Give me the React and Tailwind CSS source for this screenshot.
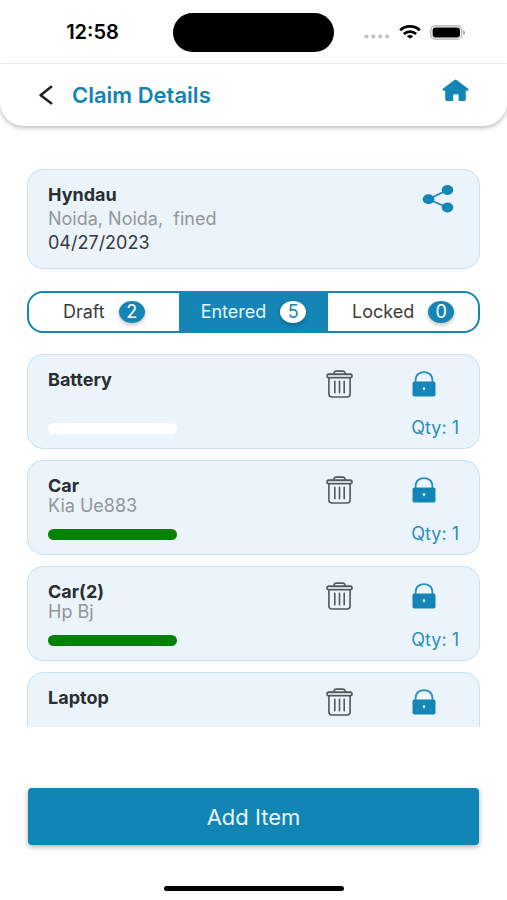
import { useState } from "react";

const items = [
  { id: 1, name: "Battery", detail: "", qty: 1, bar: "bg-white" },
  { id: 2, name: "Car", detail: "Kia Ue883", qty: 1, bar: "bg-[#058205]" },
  { id: 3, name: "Car(2)", detail: "Hp Bj", qty: 1, bar: "bg-[#058205]" },
  { id: 4, name: "Laptop", detail: "", bar: "bg-white" },
];

const tabs = [
  { name: "Draft", count: 2 },
  { name: "Entered", count: 5 },
  { name: "Locked", count: 0 },
];

function StatusBar() {
  return (
    <div className="grid h-16 shrink-0 grid-cols-[1fr_auto_1fr] items-center">
      <span className="pl-3 text-center text-xl leading-6 font-semibold text-black">12:58</span>
      <div className="h-[39px] w-[161px] rounded-full bg-black" />
      <div className="flex items-center pl-[30px]">
        <svg className="mt-2 h-[5px] w-[26px]" viewBox="0 0 26 5" fill="#c4c4c4">
          <ellipse cx="2.5" cy="2.5" rx="2.1" ry="1.9" />
          <ellipse cx="9.3" cy="2.5" rx="2.1" ry="1.9" />
          <ellipse cx="16.2" cy="2.5" rx="2.1" ry="1.9" />
          <ellipse cx="23.2" cy="2.5" rx="2.1" ry="1.9" />
        </svg>
        <svg className="ml-[9px] h-[14px] w-[22px]" viewBox="0 0 22 14" fill="none" stroke="#000" strokeWidth="2.8">
          <path d="M1.2 5.2C6.6 .2 15.4 .2 20.8 5.2" />
          <path d="M4.9 9C8.4 5.9 13.6 5.9 17.1 9" />
          <path d="M11 13.8L7.8 11.2C9.6 9.7 12.4 9.7 14.2 11.2Z" fill="#000" stroke="none" />
        </svg>
        <svg className="ml-[9px] h-[15px] w-[36px]" viewBox="0 0 36 15">
          <rect x=".8" y=".8" width="31" height="13.4" rx="4.5" fill="#fff" stroke="#b0b0b0" strokeWidth="1.2" />
          <rect x="2.6" y="2.5" width="27.4" height="10" rx="3" fill="#000" />
          <path d="M33.4 5.2C35.4 6 35.4 9 33.4 9.8Z" fill="#8a8a8a" />
        </svg>
      </div>
    </div>
  );
}

function Header() {
  return (
    <header className="flex h-[62px] shrink-0 items-center rounded-b-3xl bg-white px-[38px] shadow-[0_2px_4px_rgba(0,0,0,0.25)]">
      <button aria-label="Back">
        <svg className="h-5 w-4" viewBox="0 0 16 20" fill="none" stroke="#222" strokeWidth="2.6" strokeLinecap="round" strokeLinejoin="round">
          <path d="M13.2 1.8L2.6 10.2L13.2 18.2" />
        </svg>
      </button>
      <h1 className="ml-[18px] flex-1 text-[22px] leading-6 font-semibold text-[#1583b1]">Claim Details</h1>
      <a href="#home" aria-label="Home" className="mb-[10px]">
        <svg className="h-[23px] w-[27px]" viewBox="0 0 27 23" fill="#1486b5">
          <path d="M12.4 1Q13.5 .2 14.6 1L26.2 9.8Q26.9 10.5 26.3 11.3Q25.9 11.8 25 11.8H23.8V20.4Q23.8 22 22 22H16.6V16.4Q16.6 15.2 15.4 15.2H12.4Q11.2 15.2 11.2 16.4V22H5Q3.2 22 3.2 20.4V11.8H2Q1.1 11.8 .7 11.3Q.1 10.5 .8 9.8Z" />
        </svg>
      </a>
    </header>
  );
}

function ShareIcon() {
  return (
    <svg className="h-7 w-8" viewBox="0 0 32 28" fill="#1486b5">
      <path d="M25.5 5L6.5 14.2L25.5 22.5" fill="none" stroke="#1486b5" strokeWidth="1.7" />
      <ellipse cx="25.5" cy="5" rx="5.8" ry="4.9" />
      <ellipse cx="6.5" cy="14.2" rx="5.8" ry="4.9" />
      <ellipse cx="25.5" cy="22.5" rx="5.8" ry="4.9" />
    </svg>
  );
}

function TrashIcon() {
  return (
    <svg className="h-7 w-[27px]" viewBox="0 0 27 28" fill="none" stroke="#53585c" strokeWidth="1.6" strokeLinecap="round" strokeLinejoin="round">
      <path d="M7.6 4L8.2 2.3Q8.6 1.1 10 1.1H17Q18.4 1.1 18.8 2.3L19.4 4" />
      <rect x="1" y="4.1" width="25" height="3.6" rx="1.7" fill="#cfd6da" />
      <path d="M2.9 7.9V24Q2.9 27 6 27H21Q24.1 27 24.1 24V7.9" />
      <path d="M8.8 11.4V22.8M13.5 11.4V22.8M18.2 11.4V22.8" />
    </svg>
  );
}

function LockIcon() {
  return (
    <svg className="h-[26px] w-6" viewBox="0 0 24 26">
      <path d="M3.6 12V9C3.6 -1.6 20.4 -1.6 20.4 9V12" fill="none" stroke="#2b90bb" strokeWidth="1.8" />
      <rect x=".5" y="10.6" width="23" height="15" rx="1.8" fill="#1486b5" />
      <path d="M12 15.8L13.4 17.2L12.6 19.2H11.4L10.6 17.2Z" fill="#d9eef7" />
    </svg>
  );
}

function ItemCard({ item }) {
  return (
    <li className="flex shrink-0 justify-between rounded-2xl border border-[#c8e2ef] bg-[#ebf4fb] px-5 pt-[15px] pb-[14px]">
      <div>
        <h3 className="text-lg leading-5 font-bold text-[#2a2e32]">{item.name}</h3>
        <p className="h-5 text-lg leading-5 text-[#929699]">{item.detail}</p>
        <div className={`mt-[13px] h-[11px] w-[129px] rounded-full ${item.bar}`} />
      </div>
      <div className="flex">
        <button aria-label={`Delete ${item.name}`} className="mr-[55px] self-start">
          <TrashIcon />
        </button>
        <div className="-mb-1 flex w-[51px] flex-col justify-between">
          <button aria-label={`Lock ${item.name}`} className="mt-px ml-1 self-start">
            <LockIcon />
          </button>
          {item.qty && <span className="text-right text-lg leading-5 whitespace-nowrap text-[#2c8fba]">Qty: {item.qty}</span>}
        </div>
      </div>
    </li>
  );
}

export default function App() {
  const [activeTab, setActiveTab] = useState("Entered");

  return (
    <div className="flex h-screen flex-col bg-[#fefefe] font-[Inter,sans-serif]">
      <div className="shrink-0">
        <StatusBar />
        <div className="-mt-px h-px bg-[#f2f2f2]" />
        <Header />
      </div>

      <main className="flex min-h-0 flex-1 flex-col px-[27px] pt-[43px]">
        <section className="flex shrink-0 justify-between rounded-2xl border border-[#c8e2ef] bg-[#ebf4fb] py-[13px] pr-[25px] pl-5">
          <div className="text-lg leading-6">
            <h2 className="font-bold text-[#2a2e32]">Hyndau</h2>
            <p className="whitespace-pre text-[#929699]">Noida, Noida,  fined</p>
            <p className="text-[#34383c]">04/27/2023</p>
          </div>
          <button aria-label="Share" className="mt-[2px] self-start">
            <ShareIcon />
          </button>
        </section>

        <div className="mt-[22px] grid shrink-0 grid-cols-3 overflow-hidden rounded-2xl border-2 border-[#1486b5] bg-white">
          {tabs.map((tab) => {
            const active = tab.name === activeTab;
            return (
              <button
                key={tab.name}
                aria-pressed={active}
                onClick={() => setActiveTab(tab.name)}
                className={`flex h-[38px] items-center justify-center gap-[14px] text-lg leading-5 ${active ? "bg-[#1486b5] text-[#e4f4fb]" : "text-[#3a3a3a]"}`}
              >
                {tab.name}
                <span className={`flex h-[22px] w-[26px] items-center justify-center rounded-[50%] shadow-[0_2px_4px_rgba(0,0,0,0.25)] ${active ? "bg-white text-[#1486b5]" : "bg-[#1486b5] text-white"}`}>
                  {tab.count}
                </span>
              </button>
            );
          })}
        </div>

        <ul className="mt-[21px] flex min-h-0 flex-1 flex-col gap-[11px] overflow-hidden">
          {items.map((item) => (
            <ItemCard key={item.id} item={item} />
          ))}
        </ul>
      </main>

      <footer className="flex shrink-0 flex-col items-center px-7 pt-[61px] pb-[9px]">
        <button className="h-[57px] w-full rounded-[4px] bg-[#1185b4] text-[22px] leading-6 text-[#eaf7fd] shadow-[0_2px_5px_rgba(0,0,0,0.3)]">
          Add Item
        </button>
        <div className="mt-[41px] h-[5px] w-[180px] rounded-full bg-black" />
      </footer>
    </div>
  );
}
